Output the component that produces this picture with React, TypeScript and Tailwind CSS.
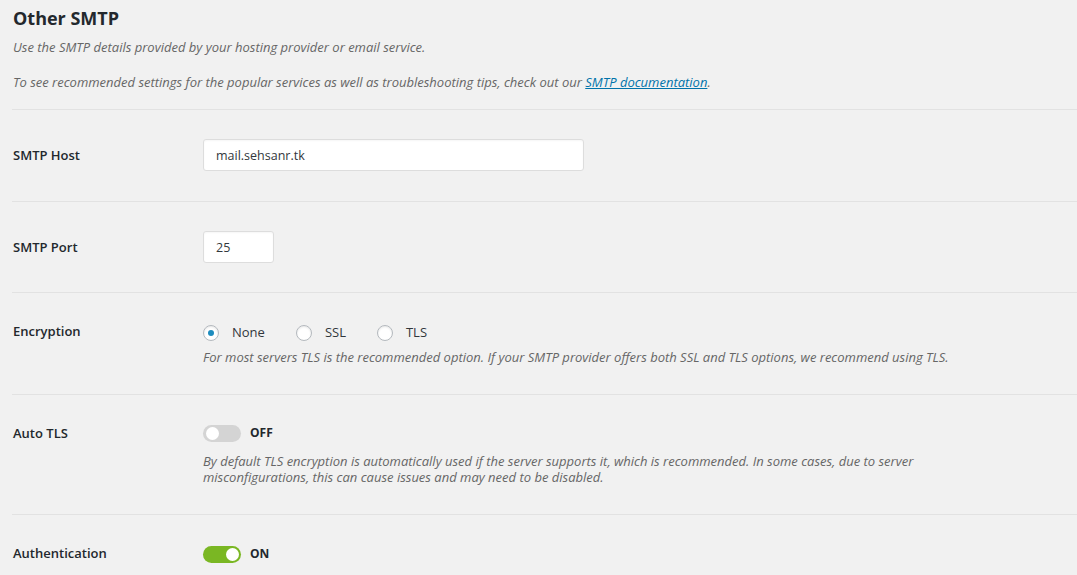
import React, { useState } from 'react';

const font = { fontFamily: '"Open Sans", "Noto Sans", sans-serif' };

const Toggle = ({ on, onClick }: { on: boolean; onClick: () => void }) => (
  <button onClick={onClick} className="flex items-center gap-[9px] h-[18px]">
    <span
      className={`relative w-[38px] h-[17px] rounded-full ${on ? 'bg-[#7ab723]' : 'bg-[#d4d4d4]'}`}
    >
      <span
        className={`absolute top-[2px] w-[13px] h-[13px] rounded-full bg-white ${on ? 'left-[23px]' : 'left-[3px]'}`}
      />
    </span>
    <span className="text-[12px] font-bold text-[#23282d]">{on ? 'ON' : 'OFF'}</span>
  </button>
);

// label + single input row
const InputRow = ({ label, pb, children }: { label: string; pb: string; children: React.ReactNode }) => (
  <div className={`flex border-b border-[#e2e2e2] pt-[29px] ${pb}`}>
    <div className="w-[191px] pl-[1px] text-[13px] leading-[32px] font-semibold text-[#23282d]">{label}</div>
    <div className="flex-1">{children}</div>
  </div>
);

const inputCls =
  'h-[32px] px-[12px] bg-white border border-[#dddddd] rounded-[3px] text-[12.5px] text-[#32373c] shadow-[inset_0_1px_2px_rgba(0,0,0,0.04)] outline-none';

export default function App() {
  const [enc, setEnc] = useState('none');
  const [autoTls, setAutoTls] = useState(false);
  const [auth, setAuth] = useState(true);

  const radios = [
    { id: 'none', label: 'None' },
    { id: 'ssl', label: 'SSL' },
    { id: 'tls', label: 'TLS' },
  ];

  return (
    <div className="min-h-[575px] bg-[#f1f1f1] pl-[12px] text-[#444]" style={font}>
      {/* Section header */}
      <div className="border-b border-[#e2e2e2] pb-[18px]">
        <h2 className="pt-[5px] pl-[1px] text-[18px] leading-[26px] font-bold text-[#23282d]">Other SMTP</h2>
        <p className="mt-[7px] pl-[1px] text-[13px] leading-[18px] italic text-[#666]">
          Use the SMTP details provided by your hosting provider or email service.
        </p>
        <p className="mt-[17px] pl-[1px] text-[13px] leading-[18px] italic text-[#666]">
          To see recommended settings for the popular services as well as troubleshooting tips, check out our{' '}
          <a href="#" className="text-[#0073aa] underline">SMTP documentation</a>.
        </p>
      </div>

      <InputRow label="SMTP Host" pb="pb-[30px]">
        <input defaultValue="mail.sehsanr.tk" className={`w-[381px] ${inputCls}`} />
      </InputRow>

      <InputRow label="SMTP Port" pb="pb-[29px]">
        <input defaultValue="25" className={`w-[71px] ${inputCls}`} />
      </InputRow>

      <div className="flex border-b border-[#e2e2e2] pt-[30px] pb-[28px]">
        <div className="w-[191px] pl-[1px] text-[13px] leading-[16px] font-semibold text-[#23282d]">Encryption</div>
        <div className="flex-1">
          <div className="flex items-center h-[20px]">
            {radios.map(r => (
              <label key={r.id} className="flex items-center mr-[31px] cursor-pointer" onClick={() => setEnc(r.id)}>
                <span className="w-[16px] h-[16px] rounded-full border border-[#b4b9be] bg-white flex items-center justify-center shadow-[inset_0_1px_2px_rgba(0,0,0,0.1)]">
                  {enc === r.id && <span className="w-[6px] h-[6px] rounded-full bg-[#1e8cbe]" />}
                </span>
                <span className="ml-[13px] text-[13px] text-[#32373c]">{r.label}</span>
              </label>
            ))}
          </div>
          <p className="mt-[5px] text-[13px] leading-[18px] italic text-[#666]">
            For most servers TLS is the recommended option. If your SMTP provider offers both SSL and TLS options, we recommend using TLS.
          </p>
        </div>
      </div>

      <div className="flex border-b border-[#e2e2e2] pt-[29px] pb-[29px]">
        <div className="w-[191px] pl-[1px] text-[13px] leading-[18px] font-semibold text-[#23282d]">Auto TLS</div>
        <div className="flex-1">
          <Toggle on={autoTls} onClick={() => setAutoTls(!autoTls)} />
          <p className="mt-[11px] max-w-[720px] text-[13px] leading-[16px] italic text-[#666]">
            By default TLS encryption is automatically used if the server supports it, which is recommended. In some cases, due to server misconfigurations, this can cause issues and may need to be disabled.
          </p>
        </div>
      </div>

      <div className="flex pt-[30px]">
        <div className="w-[191px] pl-[1px] text-[13px] leading-[17px] font-semibold text-[#23282d]">Authentication</div>
        <div className="flex-1">
          <Toggle on={auth} onClick={() => setAuth(!auth)} />
        </div>
      </div>
    </div>
  );
}
